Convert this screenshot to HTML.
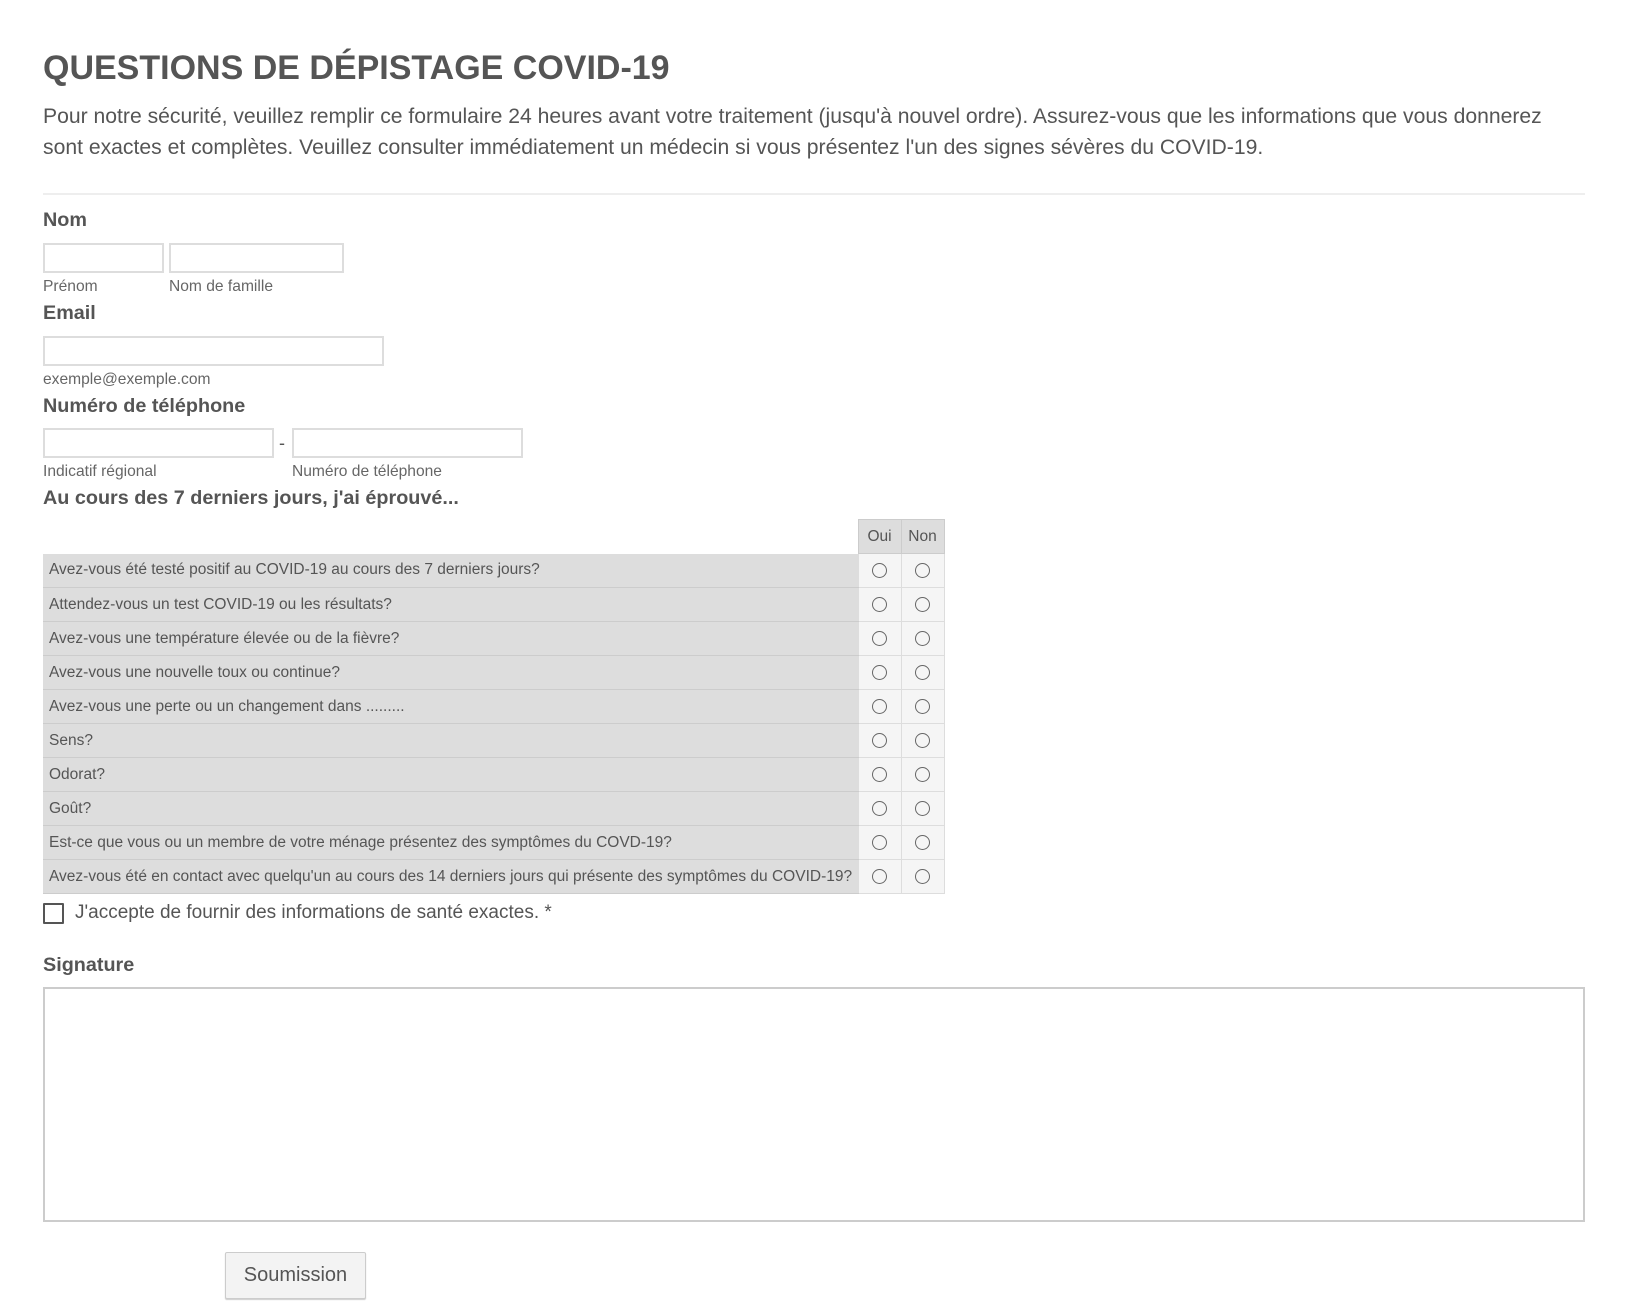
<!DOCTYPE html>
<html><head><meta charset="utf-8"><style>
*{box-sizing:border-box;margin:0;padding:0}
body{width:1628px;height:1316px;background:#fff;font-family:"Liberation Sans",Arial,sans-serif;color:#555;position:relative;overflow:hidden}
.a{position:absolute;white-space:nowrap}
h1{position:absolute;left:43px;top:49px;font-size:34px;font-weight:bold;color:#555}
.desc{position:absolute;left:43px;top:101px;width:1530px;font-size:21.15px;line-height:31px;color:#555}
.rule{position:absolute;left:43px;top:193px;width:1542px;height:2px;background:#eee}
.lbl{font-size:19.8px;font-weight:bold}
.sub{font-size:15.6px;color:#666}
.in{position:absolute;border:2px solid #ddd;background:#fff;height:30px}
table{position:absolute;left:43px;top:519px;border-collapse:collapse;font-size:15.5px}
td{height:34px;padding:0}
td.q{background:#ddd;padding-left:6px;width:815px;border-bottom:1px solid #ccc;white-space:nowrap}
td.r{background:#f5f5f5;width:43px;text-align:center;border:1px solid #ddd}
th{background:#ddd;font-weight:normal;height:34px;width:43px;border:1px solid #ccc;color:#555}
.c{display:inline-block;width:15px;height:15px;border:1px solid #666;border-radius:50%;vertical-align:middle}
</style></head><body>
<h1>QUESTIONS DE DÉPISTAGE COVID-19</h1>
<div class="desc">Pour notre sécurité, veuillez remplir ce formulaire 24 heures avant votre traitement (jusqu'à nouvel ordre). Assurez-vous que les informations que vous donnerez sont exactes et complètes. Veuillez consulter immédiatement un médecin si vous présentez l'un des signes sévères du COVID-19.</div>
<div class="rule"></div>
<div class="a lbl" style="left:43px;top:209px">Nom</div>
<div class="in" style="left:43px;top:243px;width:121px"></div>
<div class="in" style="left:169px;top:243px;width:175px"></div>
<div class="a sub" style="left:43px;top:278px">Prénom</div>
<div class="a sub" style="left:169px;top:278px">Nom de famille</div>
<div class="a lbl" style="left:43px;top:302px">Email</div>
<div class="in" style="left:43px;top:336px;width:341px"></div>
<div class="a sub" style="left:43px;top:371px">exemple@exemple.com</div>
<div class="a lbl" style="left:43px;top:395px">Numéro de téléphone</div>
<div class="in" style="left:43px;top:428px;width:231px"></div>
<div class="a" style="left:279px;top:433px;font-size:18px">-</div>
<div class="in" style="left:292px;top:428px;width:231px"></div>
<div class="a sub" style="left:43px;top:463px">Indicatif régional</div>
<div class="a sub" style="left:292px;top:463px">Numéro de téléphone</div>
<div class="a lbl" style="left:43px;top:487px">Au cours des 7 derniers jours, j'ai éprouvé...</div>
<table>
<tr><td style="background:#fff;border:none"></td><th>Oui</th><th>Non</th></tr>
<tr><td class="q">Avez-vous été testé positif au COVID-19 au cours des 7 derniers jours?</td><td class="r"><span class="c"></span></td><td class="r"><span class="c"></span></td></tr>
<tr><td class="q">Attendez-vous un test COVID-19 ou les résultats?</td><td class="r"><span class="c"></span></td><td class="r"><span class="c"></span></td></tr>
<tr><td class="q">Avez-vous une température élevée ou de la fièvre?</td><td class="r"><span class="c"></span></td><td class="r"><span class="c"></span></td></tr>
<tr><td class="q">Avez-vous une nouvelle toux ou continue?</td><td class="r"><span class="c"></span></td><td class="r"><span class="c"></span></td></tr>
<tr><td class="q">Avez-vous une perte ou un changement dans .........</td><td class="r"><span class="c"></span></td><td class="r"><span class="c"></span></td></tr>
<tr><td class="q">Sens?</td><td class="r"><span class="c"></span></td><td class="r"><span class="c"></span></td></tr>
<tr><td class="q">Odorat?</td><td class="r"><span class="c"></span></td><td class="r"><span class="c"></span></td></tr>
<tr><td class="q">Goût?</td><td class="r"><span class="c"></span></td><td class="r"><span class="c"></span></td></tr>
<tr><td class="q">Est-ce que vous ou un membre de votre ménage présentez des symptômes du COVD-19?</td><td class="r"><span class="c"></span></td><td class="r"><span class="c"></span></td></tr>
<tr><td class="q">Avez-vous été en contact avec quelqu'un au cours des 14 derniers jours qui présente des symptômes du COVID-19?</td><td class="r"><span class="c"></span></td><td class="r"><span class="c"></span></td></tr>
</table>
<div class="a" style="left:43px;top:903px;width:21px;height:21px;border:2px solid #555;border-radius:1px"></div>
<div class="a" style="left:75px;top:902px;font-size:19px">J'accepte de fournir des informations de santé exactes. *</div>
<div class="a lbl" style="left:43px;top:954px">Signature</div>
<div class="a" style="left:43px;top:987px;width:1542px;height:235px;border:2px solid #ccc"></div>
<div class="a" style="left:225px;top:1252px;width:141px;height:47px;border:1px solid #ccc;border-radius:2px;background:#f3f3f3;font-size:20px;text-align:center;line-height:45px;box-shadow:0 1px 1px #ccc">Soumission</div>
</body></html>
